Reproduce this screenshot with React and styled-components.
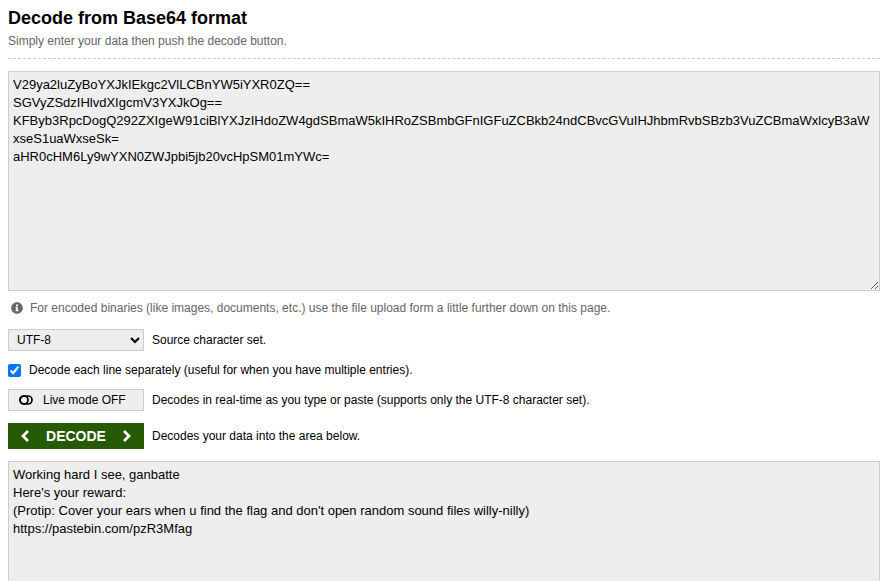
import React from 'react';
import styled, { createGlobalStyle } from 'styled-components';

const GlobalStyle = createGlobalStyle`
  * { box-sizing: border-box; }
  html { scrollbar-width: none; }
  body {
    margin: 0;
    background: #fff;
    color: #000;
    font: 12px/18px "Liberation Sans", Arial, sans-serif;
  }
`;

const Page = styled.main`
  display: flex;
  flex-direction: column;
  padding: 8px 7px 0 8px;
`;

const Header = styled.header`
  padding-bottom: 8px;
  margin-bottom: 12px;
  border-bottom: 1px dashed #ccc;
`;

const Title = styled.h1`
  margin: 0 0 4px;
  font-size: 18px;
  line-height: 20px;
`;

const Intro = styled.p`
  margin: 0;
  color: #666;
`;

const TextArea = styled.textarea`
  display: block;
  width: 100%;
  height: 220px;
  margin: 0;
  padding: 4px;
  border: 1px solid #ccc;
  border-radius: 0;
  outline: 0;
  background: #eee;
  color: #000;
  font: 13px/18px "Liberation Sans", Arial, sans-serif;
  resize: vertical;
  overflow: hidden;
  word-break: break-all;
`;

const Note = styled.p`
  display: flex;
  align-items: center;
  gap: 7px;
  margin: 8px 0 12px;
  padding-left: 3px;
  color: #666;
`;

const Options = styled.div`
  display: flex;
  flex-direction: column;
  gap: 12px;
  margin-bottom: 12px;
  line-height: 14px;
`;

const Row = styled.div`
  display: flex;
  align-items: center;
  gap: 8px;
`;

const Select = styled.select`
  width: 136px;
  height: 22px;
  padding: 0 4px;
  border: 1px solid #ccc;
  border-radius: 0;
  background: #eee;
  color: #000;
  font: inherit;
`;

const Checkbox = styled.input`
  width: 13px;
  height: 13px;
  margin: 0;
`;

const Button = styled.button`
  display: flex;
  align-items: center;
  width: 136px;
  height: 22px;
  padding: 0 10px;
  gap: 10px;
  border: 1px solid #ccc;
  background: #eee;
  color: #000;
  font: inherit;
`;

const DecodeButton = styled(Button)`
  justify-content: space-between;
  height: 26px;
  padding: 0 12px;
  border: 0;
  background: #265a05;
  color: #fff;
  font-size: 14px;
  font-weight: bold;
`;

const Info = () => (
  <svg width="12" height="12" viewBox="0 0 512 512" fill="currentColor" aria-hidden="true">
    <path d="M256 8C119 8 8 119 8 256s111 248 248 248 248-111 248-248S393 8 256 8zm0 90a46 46 0 1 1 0 92 46 46 0 0 1 0-92zm64 286c0 7-5 12-12 12H204c-7 0-12-5-12-12v-30c0-7 5-12 12-12h16v-72h-16c-7 0-12-5-12-12v-30c0-7 5-12 12-12h76c7 0 12 5 12 12v114h16c7 0 12 5 12 12v30z" />
  </svg>
);

const Toggle = () => (
  <svg width="14" height="10" viewBox="0 0 14 10" fill="none" stroke="currentColor" strokeWidth="1.7" aria-hidden="true">
    <rect x="1" y="1" width="12" height="8" rx="4" />
    <circle cx="5" cy="5" r="4" />
  </svg>
);

const Chevron = ({ d }) => (
  <svg width="10" height="14" viewBox="0 0 10 14" fill="none" stroke="currentColor" strokeWidth="2.7" aria-hidden="true">
    <path d={d} />
  </svg>
);

const encoded = [
  'V29ya2luZyBoYXJkIEkgc2VlLCBnYW5iYXR0ZQ==',
  'SGVyZSdzIHlvdXIgcmV3YXJkOg==',
  'KFByb3RpcDogQ292ZXIgeW91ciBlYXJzIHdoZW4gdSBmaW5kIHRoZSBmbGFnIGFuZCBkb24ndCBvcGVuIHJhbmRvbSBzb3VuZCBmaWxlcyB3aWxseS1uaWxseSk=',
  'aHR0cHM6Ly9wYXN0ZWJpbi5jb20vcHpSM01mYWc=',
].join('\n');

const decoded = [
  'Working hard I see, ganbatte',
  "Here's your reward:",
  "(Protip: Cover your ears when u find the flag and don't open random sound files willy-nilly)",
  'https://pastebin.com/pzR3Mfag',
].join('\n');

export default function App() {
  return (
    <>
      <GlobalStyle />
      <Page>
        <Header>
          <Title>Decode from Base64 format</Title>
          <Intro>Simply enter your data then push the decode button.</Intro>
        </Header>
        <TextArea aria-label="Encoded data" spellCheck={false} defaultValue={encoded} />
        <Note><Info />For encoded binaries (like images, documents, etc.) use the file upload form a little further down on this page.</Note>
        <Options>
          <Row>
            <Select id="charset"><option>UTF-8</option></Select>
            <label htmlFor="charset">Source character set.</label>
          </Row>
          <Row>
            <Checkbox id="lines" type="checkbox" defaultChecked />
            <label htmlFor="lines">Decode each line separately (useful for when you have multiple entries).</label>
          </Row>
          <Row>
            <Button type="button"><Toggle />Live mode OFF</Button>
            <span>Decodes in real-time as you type or paste (supports only the UTF-8 character set).</span>
          </Row>
          <Row>
            <DecodeButton type="button"><Chevron d="M8 2 3 7l5 5" />DECODE<Chevron d="m2 2 5 5-5 5" /></DecodeButton>
            <span>Decodes your data into the area below.</span>
          </Row>
        </Options>
        <TextArea aria-label="Decoded data" spellCheck={false} readOnly defaultValue={decoded} />
      </Page>
    </>
  );
}
